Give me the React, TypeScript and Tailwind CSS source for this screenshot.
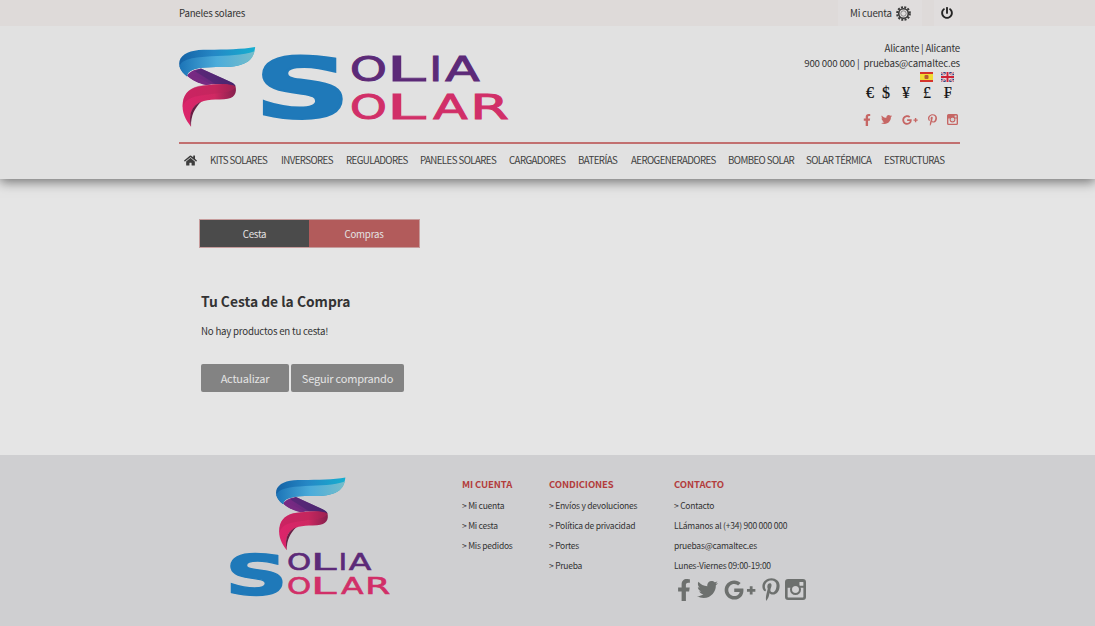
import { FaFacebookF, FaHome, FaTwitter, FaGooglePlusG, FaPinterestP, FaPowerOff } from "react-icons/fa";

type Glyph = { ch: string; x: number; y: number; w: number; h: number; from: number; to: number; bold?: boolean; color: string };

const PURPLE = "#5c2a78";
const PINK = "#d12f68";

const glyphs: Glyph[] = [
  { ch: "S", x: 1, y: 1.5, w: 80, h: 61.5, from: 6.6, to: 66, bold: true, color: "#1f79b9" },
  { ch: "O", x: 90.5, y: 0.5, w: 32, h: 25, from: 5.6, to: 73.1, color: PURPLE },
  { ch: "L", x: 131.5, y: 0.5, w: 32, h: 25, from: 9.8, to: 55.2, color: PURPLE },
  { ch: "I", x: 171.5, y: 0.5, w: 4.5, h: 25, from: 9.8, to: 19.7, color: PURPLE },
  { ch: "A", x: 183.5, y: 0.5, w: 34, h: 25, from: 0.8, to: 67.6, color: PURPLE },
  { ch: "O", x: 90.5, y: 38.5, w: 32, h: 25, from: 5.6, to: 73.1, color: PINK },
  { ch: "L", x: 131.5, y: 38.5, w: 32, h: 25, from: 9.8, to: 55.2, color: PINK },
  { ch: "A", x: 171.5, y: 38.5, w: 34, h: 25, from: 0.8, to: 67.6, color: PINK },
  { ch: "R", x: 213.5, y: 38.5, w: 32, h: 25, from: 9.8, to: 66.6, color: PINK },
];

function Wordmark({ className }: { className: string }) {
  return (
    <svg viewBox="0 0 248 66" className={className}>
      {glyphs.map((g, i) => {
        const sx = g.w / (g.to - g.from);
        return (
          <text
            key={i}
            fontSize="100"
            fontFamily="DejaVu Sans, sans-serif"
            fontWeight={g.bold ? 700 : 400}
            fill={g.color}
            stroke={g.color}
            strokeWidth="2.4"
            transform={`translate(${g.x - g.from * sx} ${g.y + g.h}) scale(${sx} ${g.h / 72.9})`}
          >
            {g.ch}
          </text>
        );
      })}
    </svg>
  );
}

function Ribbon({ className, id }: { className: string; id: string }) {
  return (
    <svg viewBox="14 20 232 242" className={className}>
      <defs>
        <linearGradient id={`${id}-a`}>
          <stop offset="0" stopColor="#1462a5" />
          <stop offset=".45" stopColor="#2587c5" />
          <stop offset="1" stopColor="#16afd0" />
        </linearGradient>
        <linearGradient id={`${id}-b`}>
          <stop offset="0" stopColor="#1c74b7" />
          <stop offset=".5" stopColor="#4bacda" />
          <stop offset="1" stopColor="#76bdcb" />
        </linearGradient>
        <linearGradient id={`${id}-c`}>
          <stop offset="0" stopColor="#7d2985" />
          <stop offset=".5" stopColor="#682a7d" />
          <stop offset="1" stopColor="#3f2067" />
        </linearGradient>
        <linearGradient id={`${id}-d`}>
          <stop offset="0" stopColor="#dc246b" />
          <stop offset=".6" stopColor="#cf2962" />
          <stop offset="1" stopColor="#85204d" />
        </linearGradient>
      </defs>
      <path d="M38 106C47 94 60 88 80 85L169 125C178 129 183 133 185 139C160 132 118 132 100 134C76 130 50 119 38 106Z" fill={`url(#${id}-c)`} />
      <path d="M38 106C48 101 60 106 68 110L110 133L96 135C72 130 50 119 38 106Z" fill="#772a82" />
      <path d="M80 85L150 117C166 124 180 132 184 138C164 132 140 131 124 132L62 93Z" fill="#4c2672" opacity=".65" />
      <path d="M184 138C190 158 182 177 150 178C112 180 83 177 61 199C47 214 46 235 50 261C34 240 21 218 25 187C29 157 50 141 85 137C119 133 157 127 184 138Z" fill={`url(#${id}-d)`} />
      <path d="M185 142C171 160 139 158 106 163C68 168 34 171 25 202C25 157 51 139 88 136C122 132 171 130 185 142Z" fill="#b82359" opacity=".45" />
      <path d="M81 185C58 195 40 216 50 261C49 227 61 205 81 185Z" fill="#681c43" />
      <path d="M244 20C205 27 153 28 101 28C61 28 31 33 18 55C8 73 18 94 38 109C38 91 62 84 93 82C139 79 174 85 209 71C231 62 241 45 244 20Z" fill={`url(#${id}-a)`} />
      <path d="M242 33C205 47 163 45 111 48C60 51 21 56 15 79C18 91 27 101 38 109C38 91 62 84 93 82C139 79 174 85 209 71C228 63 238 51 242 33Z" fill={`url(#${id}-b)`} />
    </svg>
  );
}

function Camera({ className }: { className: string }) {
  return (
    <svg viewBox="0 0 24 24" className={className}>
      <rect x="1.5" y="1.5" width="21" height="21" rx="2" fill="none" stroke="currentColor" strokeWidth="3" />
      <path d="M2 2H22V10H17A6 6 0 0 0 7 10H2Z" fill="currentColor" />
      <rect x="16.5" y="3.3" width="4.5" height="4.5" rx=".7" fill="#d2d2d3" />
      <circle cx="12" cy="12" r="5" fill="none" stroke="currentColor" strokeWidth="2.6" />
      <circle cx="12" cy="12" r="3.7" fill="#d2d2d3" />
    </svg>
  );
}

function Gear() {
  return (
    <svg viewBox="0 0 30 30" className="h-[15px] w-[15px] text-[#383838]">
      <circle cx="15" cy="15" r="12.7" fill="none" stroke="currentColor" strokeWidth="4" strokeDasharray="4 2.65" />
      <circle cx="15" cy="15" r="9.6" fill="none" stroke="currentColor" strokeWidth="3.2" />
      <circle cx="15" cy="15" r="5.4" fill="none" stroke="#686868" strokeWidth="1.4" />
    </svg>
  );
}

function Spain() {
  return (
    <svg viewBox="0 0 13 10" className="h-[10px] w-[13px]">
      <rect width="13" height="10" fill="#d5342b" />
      <rect y="2" width="13" height="6" fill="#f0db32" />
      <rect x="4.5" y="3" width="4" height="4" rx="1" fill="#b55c30" />
    </svg>
  );
}

function Britain() {
  return (
    <svg viewBox="0 0 13 10" className="h-[10px] w-[13px]">
      <rect width="13" height="10" fill="#344581" />
      <path d="M0 0L13 10M13 0L0 10" stroke="#e4dce1" strokeWidth="2" />
      <path d="M0 0L13 10M13 0L0 10" stroke="#c43645" strokeWidth=".7" />
      <path d="M6.5 0V10M0 5H13" stroke="#eee6e9" strokeWidth="3.6" />
      <path d="M6.5 0V10M0 5H13" stroke="#ce2236" strokeWidth="2" />
    </svg>
  );
}

const menu = [
  ["KITS SOLARES", "w-[71px]"],
  ["INVERSORES", "w-[65px]"],
  ["REGULADORES", "w-[74px]"],
  ["PANELES SOLARES", "w-[89px]"],
  ["CARGADORES", "w-[69px]"],
  ["BATERÍAS", "w-[53px]"],
  ["AEROGENERADORES", "w-[97px]"],
  ["BOMBEO SOLAR", "w-[78px]"],
  ["SOLAR TÉRMICA", "w-[78px]"],
  ["ESTRUCTURAS", "w-[60px]"],
];
const columns = [
  { title: "MI CUENTA", width: "w-[87px]", items: ["> Mi cuenta", "> Mi cesta", "> Mis pedidos"] },
  { title: "CONDICIONES", width: "w-[125px]", items: ["> Envíos y devoluciones", "> Política de privacidad", "> Portes", "> Prueba"] },
  { title: "CONTACTO", width: "w-[140px]", items: ["> Contacto", "LLámanos al (+34) 900 000 000", "pruebas@camaltec.es", "Lunes-Viernes 09:00-19:00"] },
];

export default function App() {
  return (
    <div className="flex h-[626px] w-[1095px] flex-col overflow-hidden whitespace-nowrap bg-[#e5e5e5] font-['Noto_Sans_CJK_SC',sans-serif] text-[9.7px] tracking-[-0.22px] text-[#333]">
      <div className="relative z-10 h-[26px] shrink-0 bg-[#dedad9] pl-[179px] pr-[135px]">
        <div className="flex h-full items-center">
          <span>Paneles solares</span>
          <div className="ml-auto flex h-full w-[84px] items-center gap-1 bg-[#e0dddd] pl-3">
            <span>Mi cuenta</span>
            <Gear />
          </div>
          <div className="ml-3 flex h-full w-[26px] items-center justify-center bg-[#e0dddd]">
            <FaPowerOff className="h-3 w-3 text-[#252525]" />
          </div>
        </div>
      </div>
      <header className="h-[153px] shrink-0 bg-[#e1e1e1] pl-[179px] pr-[135px] shadow-[0_3px_11px_rgba(0,0,0,0.5)]">
        <div className="flex h-[118px] border-b-2 border-[#c27070]">
          <Ribbon id="top" className="mt-[21px] h-[80px] w-[77px]" />
          <Wordmark className="ml-[6px] mt-[29px] h-[66px] w-[248px] overflow-visible" />
          <div className="ml-auto flex flex-col items-end pt-[15px] leading-[15px]">
            <p>Alicante | Alicante</p>
            <p className="tracking-[-0.17px]">900 000 000 |&nbsp; pruebas@camaltec.es</p>
            <div className="mr-[6px] mt-px flex gap-2">
              <Spain />
              <Britain />
            </div>
            <div className="mr-[8px] mt-[2px] flex h-[16px] items-center font-['Liberation_Serif',serif] text-[16px] font-medium tracking-normal text-[#111] [-webkit-text-stroke:0.2px_#111]">
              <span className="w-[16px]">€</span>
              <span className="w-[20px]">$</span>
              <span className="w-[21px]">¥</span>
              <span className="w-[21px]">£</span>
              <span className="w-[8px]">₣</span>
            </div>
            <div className="mr-[2px] mt-[12px] flex h-[15px] items-center text-[#c66664]">
              <FaFacebookF className="mr-[10px] h-[12px] w-[8px]" />
              <FaTwitter className="mr-[10px] h-[11px] w-[11px]" />
              <FaGooglePlusG className="mr-[10px] h-[16px] w-[16px]" />
              <FaPinterestP className="mr-[10px] h-[12px] w-[9px]" />
              <Camera className="h-[11px] w-[11px]" />
            </div>
          </div>
        </div>
        <nav className="flex h-[33px] items-center text-[9.7px] tracking-[-0.58px] text-[#404040]">
          <FaHome className="ml-[5px] mr-[13px] h-[13px] w-[13px] text-[#3d3d3d]" />
          {menu.map(([label, width]) => (
            <span key={label} className={width}>{label}</span>
          ))}
        </nav>
      </header>
      <main className="h-[276px] shrink-0 pl-[200px] pt-[41px]">
        <div className="flex h-[27px] w-[219px] text-center leading-[28px] text-[#e4e2e2] outline outline-1 outline-[#b16b6b]/60">
          <span className="w-[109px] bg-[#4b4b4b]">Cesta</span>
          <span className="w-[110px] bg-[#b25b5b]">Compras</span>
        </div>
        <div className="pl-px">
          <h1 className="mt-[44px] text-[13.8px] font-bold leading-[20px] tracking-normal text-[#333]">Tu Cesta de la Compra</h1>
          <p className="mt-[12px] leading-[17px]">No hay productos en tu cesta!</p>
          <div className="mt-[24px] flex gap-[2px] text-center text-[11px] leading-[27px] tracking-[-0.2px] text-[#e4e4e4]">
            <button className="h-[28px] w-[88px] rounded-[2px] bg-[#838383]">Actualizar</button>
            <button className="h-[28px] w-[113px] rounded-[2px] bg-[#838383]">Seguir comprando</button>
          </div>
        </div>
      </main>
      <footer className="flex h-[171px] shrink-0 bg-[#cfcfd1] pl-[230px]">
        <div className="w-[232px] pt-[22px]">
          <Ribbon id="bottom" className="ml-[46px] h-[74px] w-[70px]" />
          <Wordmark className="mt-[2px] h-[43px] w-[161px] overflow-visible" />
        </div>
        {columns.map((c) => (
          <section key={c.title} className={c.width}>
            <h2 className="mt-[20px] text-[9.5px] font-bold leading-[18px] tracking-[-0.1px] text-[#b33d3d]">{c.title}</h2>
            <ul className="mt-[2px] text-[8.5px] leading-[20px] tracking-[-0.24px]">
              {c.items.map((t) => <li key={t}>{t}</li>)}
            </ul>
            {c.title === "CONTACTO" && (
              <div className="ml-[3px] mt-[3px] flex h-[23px] items-center text-[#6d706e]">
                <FaFacebookF className="mr-[6px] h-[22px] w-[14px]" />
                <FaTwitter className="mr-[6px] h-[21px] w-[21px]" />
                <FaGooglePlusG className="mr-[6px] h-[32px] w-[32px] shrink-0" />
                <FaPinterestP className="mr-[5px] h-[23px] w-[18px] shrink-0" />
                <Camera className="h-[21px] w-[21px] shrink-0" />
              </div>
            )}
          </section>
        ))}
      </footer>
    </div>
  );
}
